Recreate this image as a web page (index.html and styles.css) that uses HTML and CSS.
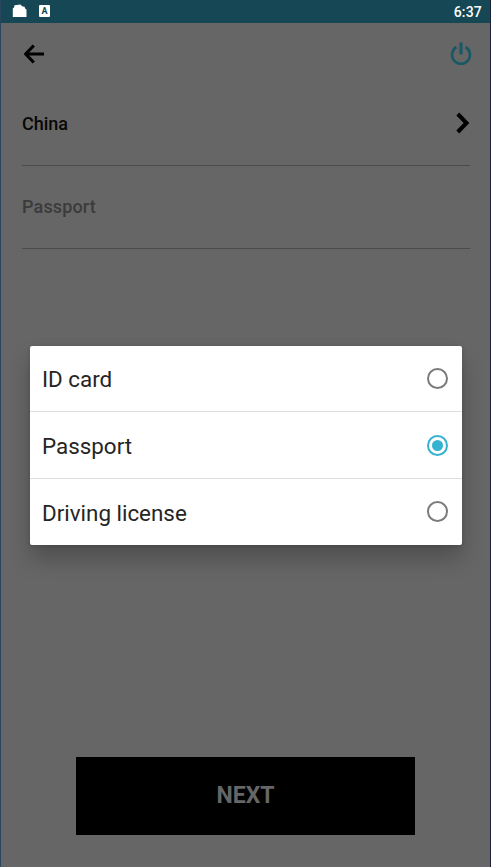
FILE: index.html
```html
<!DOCTYPE html>
<html lang="en">
<head>
<meta charset="utf-8">
<title>Document type</title>
<link rel="stylesheet" href="styles.css">
</head>
<body>
<div class="screen">
  <header class="status">
    <svg class="status-file" width="15" height="14" viewBox="0 0 15 14"><path d="M.8 4.500 2 3.500 2.500 1.200 8.500.500 10 2.300l2.500.4.800 2 1.200.8V13H.8z" fill="#fff"/></svg>
    <span class="status-a">A</span>
    <span class="clock">6:37</span>
  </header>
  <nav class="toolbar">
    <svg width="22" height="20" viewBox="0 0 22 20" fill="none" stroke="#000" stroke-width="3.200"><path d="M21 10H3M10.800 1.500 2.600 10l8.200 8.500" stroke-linejoin="round"/></svg>
    <svg width="22" height="24" viewBox="0 0 22 24" fill="none" stroke="#1b5866" stroke-width="2.600"><path d="M6.500 5a9 9 0 1 0 9 0"/><path d="M11 .5v12" stroke-width="3.200"/></svg>
  </nav>
  <main class="form">
    <div class="field">
      <span>China</span>
      <svg width="15" height="22" viewBox="0 0 15 22" fill="none" stroke="#000" stroke-width="4"><path d="m2.800 2 8.700 9-8.700 9"/></svg>
    </div>
    <div class="field hint"><span>Passport</span></div>
  </main>
  <button class="next">NEXT</button>
</div>
<div class="overlay">
  <div class="dialog">
    <label class="option"><span>ID card</span><i class="radio"></i></label>
    <label class="option"><span>Passport</span><i class="radio checked"></i></label>
    <label class="option"><span>Driving license</span><i class="radio"></i></label>
  </div>
</div>
</body>
</html>
```
FILE: styles.css
```css
* { box-sizing: border-box; }
body { margin: 0; font-family: Roboto, sans-serif; background: #666; }
svg { display: block; }
.screen {
  display: flex;
  flex-direction: column;
  height: 867px;
  border-left: 1px solid #2b4460;
  border-right: 1px solid #1c2036;
  background: #666;
  overflow: hidden;
}
.status {
  display: flex;
  align-items: center;
  flex: none;
  height: 23px;
  padding: 0 8px 1px 11px;
  background: #154854;
  color: #fff;
}
.status-a {
  width: 11px;
  height: 12px;
  margin-left: 12px;
  border-radius: 1px;
  background: #fff;
  color: #154854;
  font-size: 9px;
  font-weight: 700;
  line-height: 12px;
  text-align: center;
}
.clock { margin-left: auto; padding-top: 1px; font-size: 14px; font-weight: 500; letter-spacing: .2px; }
.toolbar {
  display: flex;
  align-items: center;
  justify-content: space-between;
  height: 60px;
  padding: 2px 18px 0 22px;
}
.form { padding: 0 20px 0 21px; }
.field {
  display: flex;
  align-items: center;
  justify-content: space-between;
  height: 83px;
  padding-bottom: 2px;
  border-bottom: 1px solid #4b4b4b;
  color: #080808;
  font-size: 18px;
  font-weight: 500;
}
.hint { color: #3b3b3b; letter-spacing: .15px; }
.next {
  width: 339px;
  height: 78px;
  margin: auto auto 32px 75px;
  padding: 0 0 2px;
  border: 0;
  background: #000;
  color: #666;
  font: 700 23px Roboto, sans-serif;
}
.overlay {
  position: absolute;
  inset: 0;
  display: flex;
  align-items: flex-start;
  padding: 346px 29.5px 0 30px;
}
.dialog {
  flex: 1;
  border-radius: 2px;
  background: #fff;
  box-shadow: 0 14px 22px rgba(0, 0, 0, .23), 0 1px 4px rgba(0, 0, 0, .15);
}
.option {
  display: flex;
  align-items: center;
  justify-content: space-between;
  height: 67px;
  padding: 0 14px 0 12px;
  color: #252525;
  font-size: 22.4px;
}
.option + .option { border-top: 1px solid #dedede; }
.option + .option span { padding-top: 2px; }
.option:first-child { height: 65px; }
.option:first-child span { padding-top: 1px; }
.option:last-child { height: 66.5px; }
.radio {
  display: flex;
  width: 21px;
  height: 21px;
  border: 2px solid #7b7b7b;
  border-radius: 50%;
}
.checked { border-color: #35b2d1; }
.checked::before {
  content: "";
  width: 11px;
  height: 11px;
  margin: auto;
  border-radius: 50%;
  background: #35b2d1;
}
```
